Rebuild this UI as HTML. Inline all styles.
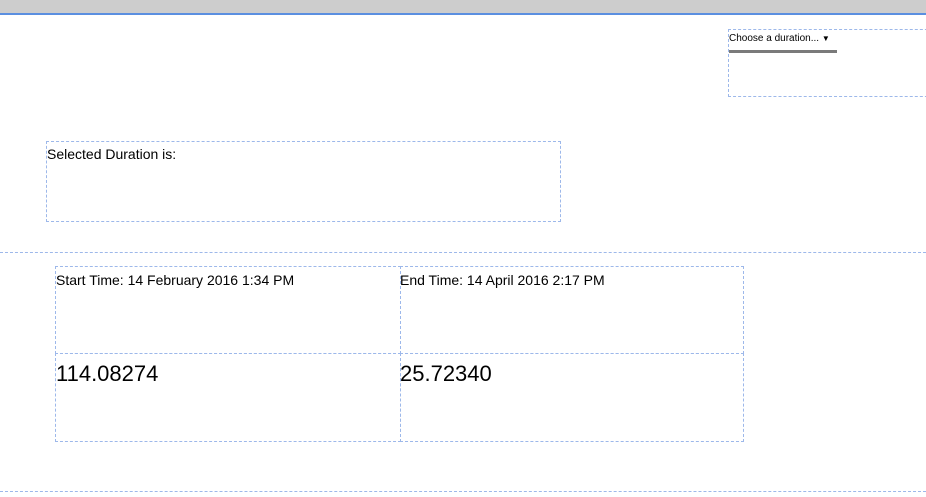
<!DOCTYPE html>
<html><head><style>
body{margin:0;width:926px;height:497px;background:#fff;position:relative;overflow:hidden;font-family:"Segoe UI","Liberation Sans",sans-serif;color:#000}
.a{position:absolute}
.d{border:1px dashed #9db8ea;box-sizing:border-box}
</style></head><body>
<div class="a" style="left:0;top:0;width:926px;height:13px;background:#cdcdcd"></div>
<div class="a" style="left:0;top:13px;width:926px;height:2px;background:#5b8fe0"></div>
<div class="a d" style="left:728px;top:29px;width:210px;height:68px"></div>
<div class="a" style="left:729px;top:33px;font-size:10px;white-space:nowrap">Choose a duration... <span style="font-size:8px">&#9660;</span></div>
<div class="a" style="left:729px;top:50px;width:108px;height:3px;background:#7a7a7a"></div>
<div class="a d" style="left:46px;top:141px;width:515px;height:81px"></div>
<div class="a" style="left:47px;top:146px;font-size:14px">Selected Duration is:</div>
<div class="a" style="left:0;top:252px;width:926px;border-top:1px dashed #9db8ea"></div>
<div class="a" style="left:0;top:491px;width:926px;border-top:1px dashed #9db8ea"></div>
<div class="a d" style="left:55px;top:266px;width:346px;height:88px"></div>
<div class="a d" style="left:400px;top:266px;width:344px;height:88px"></div>
<div class="a d" style="left:55px;top:353px;width:346px;height:89px"></div>
<div class="a d" style="left:400px;top:353px;width:344px;height:89px"></div>
<div class="a" style="left:56px;top:272px;font-size:14px;white-space:nowrap">Start Time: 14 February 2016 1:34 PM</div>
<div class="a" style="left:400px;top:272px;font-size:14px;white-space:nowrap">End Time: 14 April 2016 2:17 PM</div>
<div class="a" style="left:56px;top:361px;font-size:22px">114.08274</div>
<div class="a" style="left:400px;top:361px;font-size:22px">25.72340</div>
</body></html>
